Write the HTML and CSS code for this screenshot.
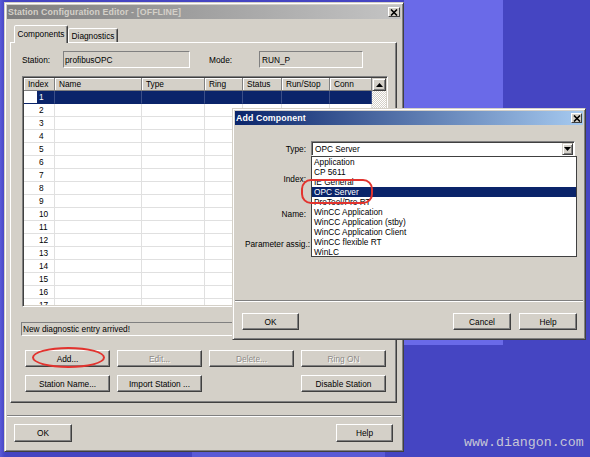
FILE: index.html
```html
<!DOCTYPE html>
<html>
<head>
<meta charset="utf-8">
<link rel="stylesheet" href="styles.css">
</head>
<body>
<div class="desktop">
  <div class="bg-win"></div>
  <div class="bg-strip"></div>

  <div class="window main">
    <div class="titlebar inactive">
      <span class="title">Station Configuration Editor - [OFFLINE]</span>
      <span class="close"><svg width="8" height="7" viewBox="0 0 8 7"><path d="M1 0.5L7 6.5M7 0.5L1 6.5" stroke="#000" stroke-width="1.6"/></svg></span>
    </div>
    <div class="main-body">
      <div class="tabs">
        <div class="tab active">Components</div>
        <div class="tab">Diagnostics</div>
      </div>
      <div class="panel">
        <div class="station-row">
          <span class="lbl lbl-station">Station:</span>
          <div class="field ro f-station">profibusOPC</div>
          <span class="lbl lbl-mode">Mode:</span>
          <div class="field ro f-mode">RUN_P</div>
        </div>
        <div class="grid">
          <div class="grid-main">
            <div class="grow head"><div>Index</div><div>Name</div><div>Type</div><div>Ring</div><div>Status</div><div>Run/Stop</div><div>Conn</div></div>
            <div class="grow sel"><div>1</div><div></div><div></div><div></div><div></div><div></div><div></div></div>
            <div class="grow"><div>2</div><div></div><div></div><div></div><div></div><div></div><div></div></div>
            <div class="grow"><div>3</div><div></div><div></div><div></div><div></div><div></div><div></div></div>
            <div class="grow"><div>4</div><div></div><div></div><div></div><div></div><div></div><div></div></div>
            <div class="grow"><div>5</div><div></div><div></div><div></div><div></div><div></div><div></div></div>
            <div class="grow"><div>6</div><div></div><div></div><div></div><div></div><div></div><div></div></div>
            <div class="grow"><div>7</div><div></div><div></div><div></div><div></div><div></div><div></div></div>
            <div class="grow"><div>8</div><div></div><div></div><div></div><div></div><div></div><div></div></div>
            <div class="grow"><div>9</div><div></div><div></div><div></div><div></div><div></div><div></div></div>
            <div class="grow"><div>10</div><div></div><div></div><div></div><div></div><div></div><div></div></div>
            <div class="grow"><div>11</div><div></div><div></div><div></div><div></div><div></div><div></div></div>
            <div class="grow"><div>12</div><div></div><div></div><div></div><div></div><div></div><div></div></div>
            <div class="grow"><div>13</div><div></div><div></div><div></div><div></div><div></div><div></div></div>
            <div class="grow"><div>14</div><div></div><div></div><div></div><div></div><div></div><div></div></div>
            <div class="grow"><div>15</div><div></div><div></div><div></div><div></div><div></div><div></div></div>
            <div class="grow"><div>16</div><div></div><div></div><div></div><div></div><div></div><div></div></div>
            <div class="grow last"><div>17</div><div></div><div></div><div></div><div></div><div></div><div></div></div>
          </div>
          <div class="scrollbar">
            <div class="sb-btn"><svg width="7" height="4" viewBox="0 0 7 4"><path d="M3.5 0L7 4H0Z" fill="#000"/></svg></div>
            <div class="sb-track"></div>
          </div>
        </div>
        <div class="field status">New diagnostic entry arrived!</div>
        <div class="btn-grid">
          <div class="btn">Add...</div>
          <div class="btn disabled">Edit...</div>
          <div class="btn disabled">Delete...</div>
          <div class="btn disabled">Ring ON</div>
          <div class="btn">Station Name...</div>
          <div class="btn">Import Station ...</div>
          <div class="btn col4">Disable Station</div>
        </div>
      </div>
      <div class="sep"></div>
      <div class="footer">
        <div class="btn btn-ok">OK</div>
        <div class="btn btn-help">Help</div>
      </div>
    </div>
  </div>

  <div class="window add">
    <div class="titlebar active">
      <span class="title">Add Component</span>
      <span class="close"><svg width="8" height="7" viewBox="0 0 8 7"><path d="M1 0.5L7 6.5M7 0.5L1 6.5" stroke="#000" stroke-width="1.6"/></svg></span>
    </div>
    <div class="add-body">
      <div class="form">
        <div class="frow r-type">
          <span class="flbl">Type:</span>
          <div class="combo">
            <span class="combo-text">OPC Server</span>
            <span class="combo-btn"><svg width="7" height="4" viewBox="0 0 7 4"><path d="M0 0H7L3.5 4Z" fill="#000"/></svg></span>
            <div class="dropdown">
              <div class="opt">Application</div>
              <div class="opt">CP 5611</div>
              <div class="opt">IE General</div>
              <div class="opt chosen">OPC Server</div>
              <div class="opt">ProTool/Pro RT</div>
              <div class="opt">WinCC Application</div>
              <div class="opt">WinCC Application (stby)</div>
              <div class="opt">WinCC Application Client</div>
              <div class="opt">WinCC flexible RT</div>
              <div class="opt">WinLC</div>
            </div>
          </div>
        </div>
        <div class="frow r-index"><span class="flbl">Index:</span><div class="field white f-short"></div></div>
        <div class="frow r-name"><span class="flbl">Name:</span><div class="field white f-long"></div></div>
        <div class="frow r-param"><span class="flbl flbl-wide">Parameter assig.:</span><div class="field white f-long"></div></div>
      </div>
      <div class="sep add-sep"></div>
      <div class="footer add-footer">
        <div class="btn btn-aok">OK</div>
        <div class="spacer"></div>
        <div class="btn btn-cancel">Cancel</div>
        <div class="btn btn-ahelp">Help</div>
      </div>
    </div>
  </div>

  <div class="oval oval-opc"></div>
  <div class="oval oval-add"></div>
  <div class="watermark">www.diangon.com</div>
</div>
</body>
</html>
```

FILE: styles.css
```css
html, body {
  margin: 0;
  padding: 0;
}
body {
  background: #4545c2;
  width: 590px;
  height: 457px;
  overflow: hidden;
  font-family: "Liberation Sans", Arial, sans-serif;
  font-size: 8.3px;
  color: #000;
}
.desktop {
  position: relative;
  width: 590px;
  height: 457px;
  background: linear-gradient(to right, #5a5ad8 0, #4848c6 4px, #4545c2 6px);
}
.bg-win {
  position: absolute;
  left: 404px;
  top: 0;
  width: 99px;
  height: 345px;
  background: #6a6ae8;
}
.bg-strip {
  position: absolute;
  left: 192px;
  top: 452px;
  width: 193px;
  height: 5px;
  background: #5a5ad6;
}

/* windows */
.window {
  position: absolute;
  box-sizing: border-box;
  background: #d4d0c8;
  border: 1px solid;
  border-color: #d4d0c8 #404040 #404040 #d4d0c8;
  box-shadow: inset 1px 1px #fff, inset -1px -1px #808080;
  padding: 2px;
  display: flex;
  flex-direction: column;
}
.main {
  left: 4px;
  top: 2px;
  width: 400px;
  height: 450px;
}
.add {
  left: 232px;
  top: 108px;
  width: 354px;
  height: 232px;
}
.titlebar {
  height: 14px;
  flex: 0 0 14px;
  display: flex;
  align-items: center;
  justify-content: space-between;
  padding-left: 1px;
}
.titlebar .title {
  font-weight: bold;
  font-size: 8.8px;
  letter-spacing: 0.1px;
  white-space: nowrap;
}
.titlebar.inactive {
  background: linear-gradient(to right, #7e7e7e, #c4c4c4);
  color: #d4d0c8;
}
.titlebar.active {
  background: linear-gradient(to right, #0a246a, #a6caf0);
  color: #fff;
}
.close {
  width: 12px;
  height: 10px;
  box-sizing: border-box;
  margin-right: 1px;
  background: #d4d0c8;
  border: 1px solid;
  border-color: #fff #404040 #404040 #fff;
  display: flex;
  align-items: center;
  justify-content: center;
}
.add .close {
  width: 11px;
}

/* main body */
.main-body {
  flex: 1;
  display: flex;
  flex-direction: column;
  padding: 0 4px 0 3px;
}
.tabs {
  margin-top: 6px;
  height: 17px;
  display: flex;
  align-items: flex-end;
  padding-left: 4px;
}
.tab {
  box-sizing: border-box;
  border: 1px solid;
  border-bottom: none;
  border-color: #fff #404040 transparent #fff;
  box-shadow: inset -1px 0 #808080;
  border-radius: 2px 2px 0 0;
  background: #d4d0c8;
  display: flex;
  align-items: center;
  justify-content: center;
  white-space: nowrap;
}
.tab.active {
  width: 54px;
  height: 18px;
  margin-bottom: -1px;
  position: relative;
  z-index: 1;
  padding-bottom: 1px;
}
.tab:not(.active) {
  width: 50px;
  height: 14px;
}
.panel {
  box-sizing: border-box;
  height: 361px;
  border: 1px solid;
  border-color: #fff #404040 #404040 #fff;
  box-shadow: inset -1px -1px #808080;
  padding: 8px 8px 0 11px;
}
.station-row {
  display: flex;
  align-items: center;
  height: 17px;
}
.lbl {
  white-space: nowrap;
}
.lbl-station { width: 41px; }
.lbl-mode { width: 50px; margin-left: 19px; }
.field {
  box-sizing: border-box;
  border: 1px solid;
  border-color: #808080 #fff #fff #808080;
  white-space: nowrap;
  overflow: hidden;
  display: flex;
  align-items: center;
  padding-left: 1px;
}
.ro {
  background: #d4d0c8;
  height: 17px;
}
.f-station { width: 127px; }
.f-mode { width: 104px; padding-left: 2px; }

/* grid */
.grid {
  margin-top: 8px;
  width: 366px;
  height: 231px;
  box-sizing: border-box;
  border: 1px solid;
  border-color: #808080 #fff #fff #808080;
  box-shadow: inset 1px 1px #404040, inset -1px -1px #d4d0c8;
  padding: 1px;
  display: flex;
}
.grid-main {
  width: 348px;
  overflow: hidden;
  background: #fff;
}
.grow {
  display: grid;
  grid-template-columns: 31px 87px 63px 38px 39px 48px 42px;
  height: 13px;
}
.grow.last {
  height: 10px;
  overflow: hidden;
}
.grow > div {
  box-sizing: border-box;
  border-right: 1px solid #e0e0e0;
  border-bottom: 1px solid #e0e0e0;
  line-height: 12px;
  white-space: nowrap;
}
.grow > div:first-child {
  padding-left: 15px;
}
.grow.head > div {
  background: #d4d0c8;
  border-right-color: #808080;
  border-bottom-color: #808080;
  box-shadow: inset 1px 1px #fff;
  padding-left: 4px;
}
.grow.head > div:first-child { padding-left: 4px; }
.grow.sel > div {
  background: #0a246a;
  color: #fff;
  border-right-color: #3b4f88;
  border-bottom-color: #0a246a;
}
.grow.sel > div:first-child {
  background: linear-gradient(to right, #fff 13px, #0a246a 13px);
}
.scrollbar {
  width: 14px;
  display: flex;
  flex-direction: column;
}
.sb-btn {
  box-sizing: border-box;
  height: 13px;
  background: #d4d0c8;
  border: 1px solid;
  border-color: #d4d0c8 #404040 #404040 #d4d0c8;
  box-shadow: inset 1px 1px #fff, inset -1px -1px #808080;
  display: flex;
  align-items: center;
  justify-content: center;
}
.sb-track {
  flex: 1;
  background-color: #eeece8;
  background-image: repeating-conic-gradient(#fff 0 25%, #d4d0c8 0 50%);
  background-size: 2px 2px;
}

.status {
  margin-top: 15px;
  margin-left: -1px;
  width: 367px;
  height: 14px;
  background: #d4d0c8;
  padding-left: 1px;
}

.btn-grid {
  margin-top: 14px;
  margin-left: 3px;
  display: grid;
  grid-template-columns: repeat(4, 85px);
  grid-auto-rows: 17px;
  column-gap: 7px;
  row-gap: 8px;
}
.btn {
  box-sizing: border-box;
  background: #d4d0c8;
  border: 1px solid;
  border-color: #fff #404040 #404040 #fff;
  box-shadow: inset -1px -1px #808080;
  display: flex;
  align-items: center;
  justify-content: center;
  white-space: nowrap;
}
.btn.disabled {
  color: #8c8a86;
  text-shadow: 1px 1px #fff;
}
.col4 { grid-column: 4; }

.sep {
  margin: 12px -4px 0 -3px;
  border-top: 1px solid #808080;
  border-bottom: 1px solid #fff;
}
.footer {
  margin-top: 7px;
  display: flex;
  justify-content: space-between;
  padding: 0 4px;
}
.btn-ok { width: 58px; height: 18px; }
.btn-help { width: 57px; height: 18px; }

/* add component */
.add-body {
  flex: 1;
  display: flex;
  flex-direction: column;
}
.form {
  margin-top: 16px;
}
.frow {
  display: flex;
  align-items: center;
  height: 15px;
}
.flbl {
  width: 71px;
  text-align: right;
  white-space: nowrap;
  margin-right: 5px;
}
.flbl-wide {
  margin-right: 1px;
  width: 75px;
}
.r-index { margin-top: 15px; }
.r-name { margin-top: 20px; }
.r-param { margin-top: 15px; }
.white {
  background: #fff;
  height: 15px;
}
.f-short { width: 60px; }
.f-long { width: 200px; }
.combo {
  position: relative;
  box-sizing: border-box;
  width: 264px;
  height: 15px;
  background: #fff;
  border: 1px solid;
  border-color: #808080 #fff #fff #808080;
  box-shadow: inset 1px 1px #404040;
  display: flex;
  align-items: center;
  justify-content: space-between;
  padding-left: 3px;
}
.combo-btn {
  box-sizing: border-box;
  width: 11px;
  height: 12px;
  margin-right: 1px;
  background: #d4d0c8;
  border: 1px solid;
  border-color: #d4d0c8 #404040 #404040 #d4d0c8;
  box-shadow: inset 1px 1px #fff, inset -1px -1px #808080;
  display: flex;
  align-items: center;
  justify-content: center;
}
.dropdown {
  position: absolute;
  left: -1px;
  top: 14px;
  width: 266px;
  height: 101px;
  box-sizing: border-box;
  background: #fff;
  border: 1px solid #404040;
  z-index: 2;
}
.opt {
  height: 10px;
  line-height: 10px;
  padding-left: 2px;
  white-space: nowrap;
}
.opt.chosen {
  background: #0a246a;
  color: #fff;
}
.add-sep {
  margin: auto 0 0 0;
}
.add-footer {
  margin-top: 11px;
  margin-bottom: 7px;
  padding: 0 6px 0 7px;
  justify-content: flex-start;
}
.spacer { flex: 1; }
.btn-aok { width: 57px; height: 17px; }
.btn-cancel { width: 58px; height: 17px; margin-right: 8px; }
.btn-ahelp { width: 58px; height: 17px; }

/* annotations */
.oval {
  position: absolute;
  box-sizing: border-box;
  border: 2px solid #e2332e;
  z-index: 5;
}
.oval-opc {
  left: 301px;
  top: 179px;
  width: 72px;
  height: 25px;
  border-radius: 10px;
}
.oval-add {
  left: 32px;
  top: 347px;
  width: 73px;
  height: 21px;
  border-radius: 50%;
}
.watermark {
  position: absolute;
  left: 464px;
  top: 435px;
  font-family: "Liberation Mono", "DejaVu Sans Mono", monospace;
  font-size: 13.3px;
  color: #c6c6d6;
  white-space: nowrap;
}
```
